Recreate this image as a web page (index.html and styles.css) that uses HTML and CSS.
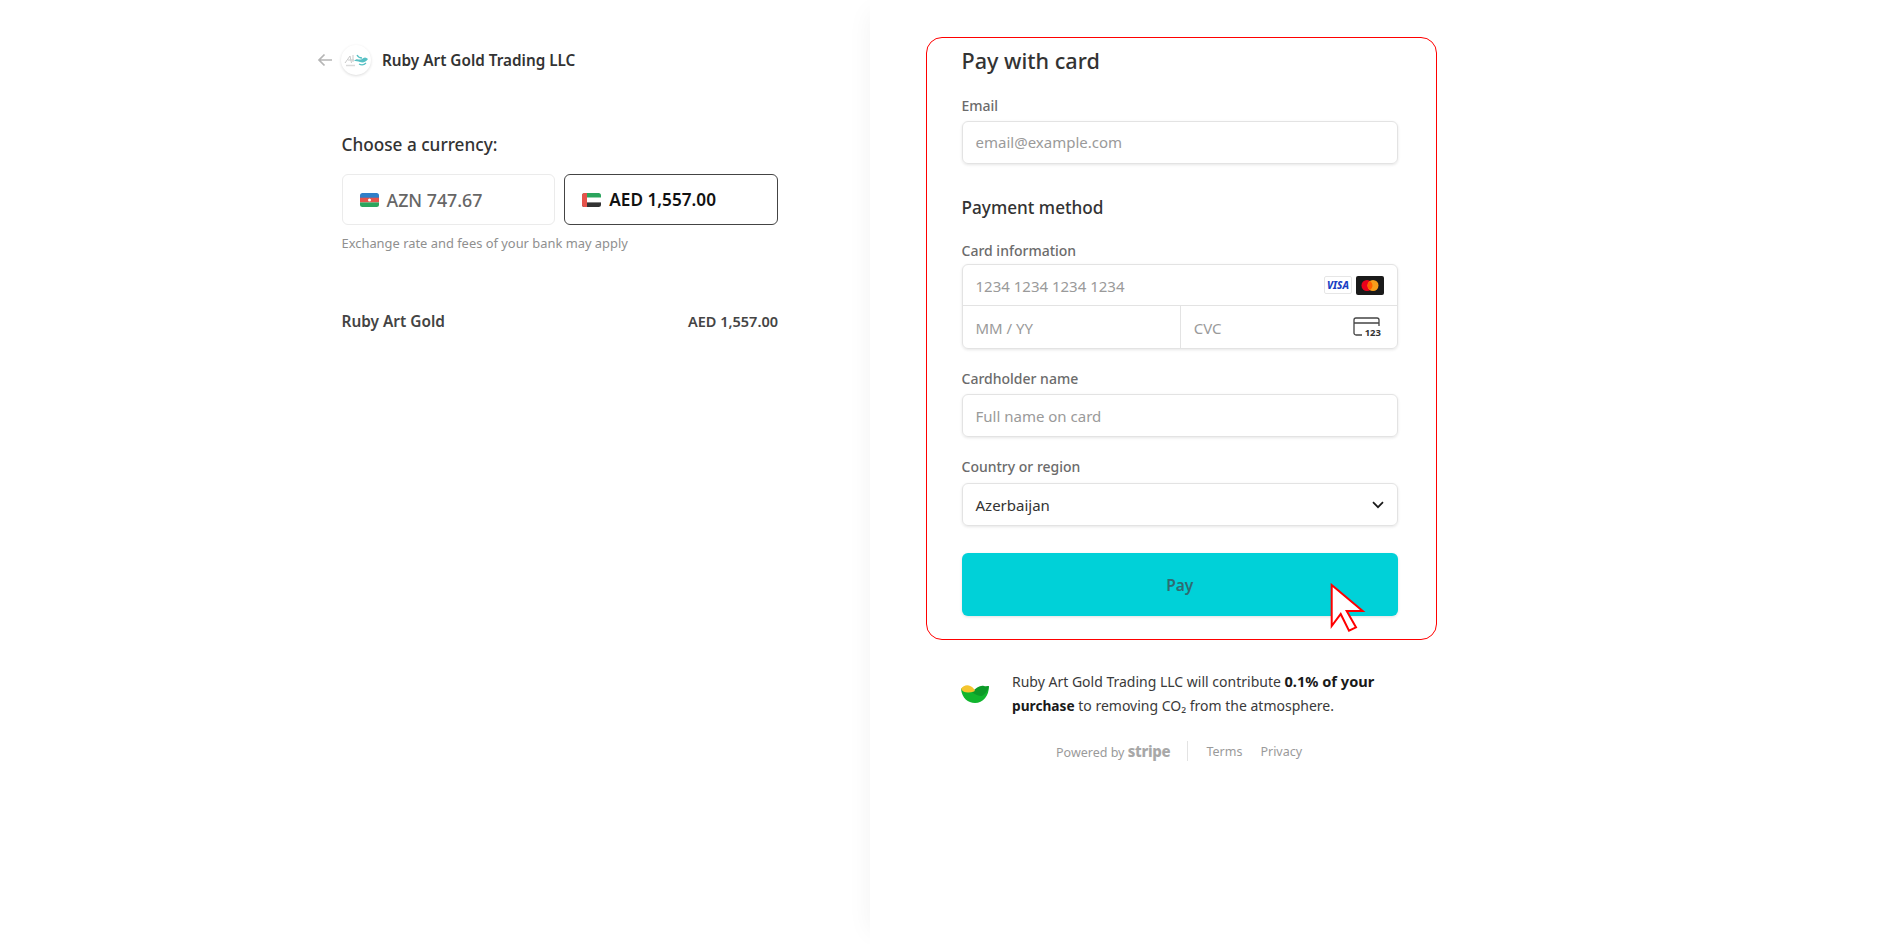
FILE: index.html
```html
<!DOCTYPE html>
<html lang="en">
<head>
<meta charset="utf-8">
<title>Pay with card</title>
<link rel="stylesheet" href="styles.css">
</head>
<body>
<div class="page">
  <section class="summary">
    <div class="summary-inner">
      <header class="merchant">
        <svg class="back" width="15" height="14" viewBox="0 0 15 14"><path d="M15 7H2M7.500 1.500 2 7l5.500 5.500" fill="none" stroke="#b5b5b5" stroke-width="1.700"/></svg>
        <span class="logo">
          <svg width="26" height="16" viewBox="0 0 26 16"><path d="M2 11 7 4l1.500 7M5 8h6M10 3v7" fill="none" stroke="#c9c9c9" stroke-width="1"/><path d="M11 9c3-4 5 0 8-2 2-2 4-2 6 0-2 3-5 4-8 3-2-1-4-1-6-1z" fill="#56c0c4"/><path d="M14 3c1 2 3 3 5 3M16 12c2 1 5 1 7-1" fill="none" stroke="#56c0c4" stroke-width="1.300"/><path d="M3 13.500h9" stroke="#dadada" stroke-width="1.500"/></svg>
        </span>
        <span class="merchant-name">Ruby Art Gold Trading LLC</span>
      </header>
      <h2 class="choose">Choose a currency:</h2>
      <div class="currencies">
        <div class="currency">
          <svg class="flag" width="19" height="14" viewBox="0 0 19 14"><defs><clipPath id="f1"><rect width="19" height="14" rx="2.500"/></clipPath></defs><g clip-path="url(#f1)"><rect width="19" height="5" fill="#2f7fc8"/><rect y="4.700" width="19" height="4.700" fill="#e5534b"/><rect y="9.400" width="19" height="4.600" fill="#2ba55d"/><circle cx="9.500" cy="7" r="1.500" fill="#fff"/></g></svg>
          <span>AZN 747.67</span>
        </div>
        <div class="currency selected">
          <svg class="flag" width="19" height="14" viewBox="0 0 19 14"><defs><clipPath id="f2"><rect width="19" height="14" rx="2.500"/></clipPath></defs><g clip-path="url(#f2)"><rect width="19" height="4.700" fill="#2ba55d"/><rect y="4.700" width="19" height="4.700" fill="#fff"/><rect y="9.400" width="19" height="4.600" fill="#333"/><rect width="5" height="14" fill="#e5534b"/></g></svg>
          <span>AED 1,557.00</span>
        </div>
      </div>
      <p class="note">Exchange rate and fees of your bank may apply</p>
      <div class="line-item">
        <span>Ruby Art Gold</span>
        <span class="amount">AED 1,557.00</span>
      </div>
    </div>
  </section>
  <main class="checkout">
    <div class="frame">
      <h1 class="title">Pay with card</h1>
      <label class="label label-email">Email</label>
      <div class="field"><span class="ph">email@example.com</span></div>
      <h2 class="method">Payment method</h2>
      <label class="label label-card">Card information</label>
      <div class="card-box">
        <div class="card-row">
          <span class="ph">1234 1234 1234 1234</span>
          <span class="brands">
            <svg width="28" height="18" viewBox="0 0 28 18"><rect x=".5" y=".5" width="27" height="17" rx="1.500" fill="#fff" stroke="#e6e6e6"/><text class="visa" x="14" y="13" text-anchor="middle">VISA</text></svg>
            <svg width="28" height="19" viewBox="0 0 28 19"><rect width="28" height="19" rx="2" fill="#1a1a1a"/><circle cx="11" cy="9.500" r="5.500" fill="#eb001b"/><circle cx="17" cy="9.500" r="5.500" fill="#f79e1b"/><path d="M14 4.900a5.500 5.500 0 0 1 0 9.200 5.500 5.500 0 0 1 0-9.200z" fill="#ff5f00"/></svg>
          </span>
        </div>
        <div class="card-split">
          <div class="card-cell"><span class="ph">MM / YY</span></div>
          <div class="card-cell cvc">
            <span class="ph">CVC</span>
            <span class="cvc-icon">
              <svg width="27" height="19" viewBox="0 0 27 19"><path d="M9 18H3a2 2 0 0 1-2-2V3a2 2 0 0 1 2-2h21a2 2 0 0 1 2 2v6M1 6h25" fill="none" stroke="#444" stroke-width="1.300"/></svg>
              <span class="cvc-num">123</span>
            </span>
          </div>
        </div>
      </div>
      <label class="label label-name">Cardholder name</label>
      <div class="field field-name"><span class="ph">Full name on card</span></div>
      <label class="label label-country">Country or region</label>
      <div class="field select">
        <span>Azerbaijan</span>
        <svg width="12" height="8" viewBox="0 0 12 8"><path d="M1 1.200 6 6.200l5-5" fill="none" stroke="#1a1a1a" stroke-width="1.700"/></svg>
      </div>
      <button class="pay" type="button">Pay</button>
      <svg class="cursor" width="36" height="50" viewBox="0 0 36 50"><path d="M1.700 2 32.700 28H16.700L26 44.300 19 47.700 10.700 31 1.700 43z" fill="#fff" stroke="#f00" stroke-width="2"/></svg>
    </div>
    <div class="climate">
      <svg class="leaf" width="28" height="20" viewBox="0 0 28 20"><path d="M0 5C1 14 7 19 14 19c8 0 14-7 14-17-4 4-9 6-14 5C9 6 4 1 0 5z" fill="#11b52e"/><path d="M11 8c4-4 8-7 12-6 2 .5 4 0 5 0-1 5-4 8-7 10-4 0-8-2-10-4z" fill="#0c9a28"/><path d="M0 5C3 0 9 0 13 5c1 1 1 2 0 2.500C8 9 2 9 0 5z" fill="#f5c52e"/></svg>
      <p class="climate-text">Ruby Art Gold Trading LLC will contribute <strong>0.1% of your</strong> <strong class="tight">purchase</strong> to removing CO₂ from the atmosphere.</p>
    </div>
    <footer class="foot">
      <span class="powered">Powered by <b class="stripe">stripe</b></span>
      <span class="sep"></span>
      <span class="link">Terms</span>
      <span class="link">Privacy</span>
    </footer>
  </main>
</div>
</body>
</html>
```
FILE: styles.css
```css
* { box-sizing: border-box; }
html, body { margin: 0; height: 100%; }
body { background: #fff; font-family: "Noto Sans", "Open Sans", sans-serif; color: #333; overflow: hidden; }
.page { display: flex; height: 944px; }
.summary { width: 870px; flex: none; padding: 45px 0 0 317px; }
.summary-inner { width: 461px; }
.merchant { display: flex; align-items: center; height: 30px; }
.back { margin-right: 9px; }
.logo { width: 30px; height: 30px; border-radius: 50%; background: #fff; box-shadow: 0 1px 3px rgba(0,0,0,.14); display: flex; align-items: center; justify-content: center; margin-right: 11px; }
.merchant-name { font-size: 15.3px; font-weight: 600; color: #333; }
.choose { margin: 58px 0 0 24.5px; font-size: 17.2px; line-height: 24px; font-weight: 500; color: #333; }
.currencies { display: flex; gap: 9px; margin: 17px 0 0 24.5px; width: 436.5px; }
.currency { flex: 1; height: 51px; border: 1px solid #ebebeb; border-radius: 6px; display: flex; align-items: center; padding-left: 17px; gap: 8px; font-size: 17.8px; font-weight: 500; color: #666; }
.currency.selected { border: 1.5px solid #444; color: #111; font-weight: 600; font-size: 17.2px; padding-left: 17px; }
.note { margin: 10px 0 0 24.5px; font-size: 12.9px; line-height: 16px; color: #8f8f8f; }
.line-item { display: flex; justify-content: space-between; align-items: baseline; margin: 60px 0 0 24.5px; width: 436.5px; font-size: 15.4px; line-height: 20px; font-weight: 600; color: #444; }
.amount { font-size: 14.5px; }
.checkout { flex: 1; position: relative; padding: 37px 0 0 56px; box-shadow: -12px 0 24px -12px rgba(0,0,0,.05); }
.frame { position: relative; width: 511px; height: 603px; border: 1px solid #f00; border-radius: 16px; padding: 8px 38px 0 34.5px; }
.title { margin: 0; font-size: 21.6px; line-height: 30px; font-weight: 500; color: #333; }
.label { display: block; font-size: 14px; line-height: 18px; font-weight: 500; color: #6b6b6b; }
.label-email { margin-top: 21px; }
.field { margin-top: 6px; height: 43px; border: 1px solid #e3e3e3; border-radius: 6px; box-shadow: 0 1px 3px rgba(0,0,0,.1); padding: 0 13px 1px; display: flex; align-items: center; font-size: 15px; }
.ph { font-size: 15px; color: #9a9a9a; }
.method { margin: 32px 0 0; font-size: 17.2px; line-height: 24px; font-weight: 500; color: #333; }
.label-card { margin-top: 22px; }
.card-box { margin-top: 4px; height: 85px; border: 1px solid #e3e3e3; border-radius: 6px; box-shadow: 0 1px 3px rgba(0,0,0,.1); }
.card-row { height: 41px; border-bottom: 1px solid #e3e3e3; display: flex; align-items: center; justify-content: space-between; padding: 0 13px; }
.card-row .ph { padding-top: 2px; }
.card-cell .ph { padding-top: 1px; }
.brands { display: flex; align-items: center; gap: 4px; }
.visa { font: italic 800 10px "Noto Sans", sans-serif; fill: #1a3fc4; }
.card-split { display: flex; height: 42px; }
.card-cell { flex: 1 1 50%; min-width: 0; display: flex; align-items: center; padding: 0 13px; }
.card-cell.cvc { border-left: 1px solid #e3e3e3; justify-content: space-between; padding-right: 16px; }
.cvc-icon { position: relative; display: block; width: 28px; height: 20px; }
.cvc-num { position: absolute; right: 0; bottom: -1px; padding: 0 0 0 1px; background: #fff; font-size: 9.5px; line-height: 10px; font-weight: 700; color: #333; }
.label-name { margin-top: 21px; }
.field-name { margin-top: 6px; padding: 1px 13px 0; }
.label-country { margin-top: 21px; }
.select { margin-top: 7px; padding: 1px 13px 0; justify-content: space-between; color: #333; }
.pay { display: block; width: 100%; height: 63px; margin-top: 27px; border: 0; border-radius: 6px; background: #00d1d8; box-shadow: 0 1px 3px rgba(0,0,0,.12); font: 600 15.5px "Noto Sans", sans-serif; color: #2f6b70; }
.cursor { position: absolute; left: 403px; top: 545px; }
.climate { display: flex; align-items: center; margin: 29px 0 0 35px; width: 440px; }
.leaf { flex: none; margin-right: 23px; }
.climate-text { margin: 0; font-size: 14px; line-height: 24px; color: #3a3a3a; width: 380px; }
.climate-text strong { color: #1a1a1a; font-weight: 700; font-size: 14.6px; }
.climate-text .tight { font-size: 13.7px; }
.foot { display: flex; align-items: center; margin: 22px 0 0 130px; height: 22px; font-size: 12.5px; color: #9a9a9a; }
.stripe { font-size: 15px; font-weight: 800; letter-spacing: -.3px; color: #a8a8a8; }
.sep { width: 1px; height: 20px; background: #e3e3e3; margin: 0 18px 0 17px; }
.link { margin-right: 18px; }
```
